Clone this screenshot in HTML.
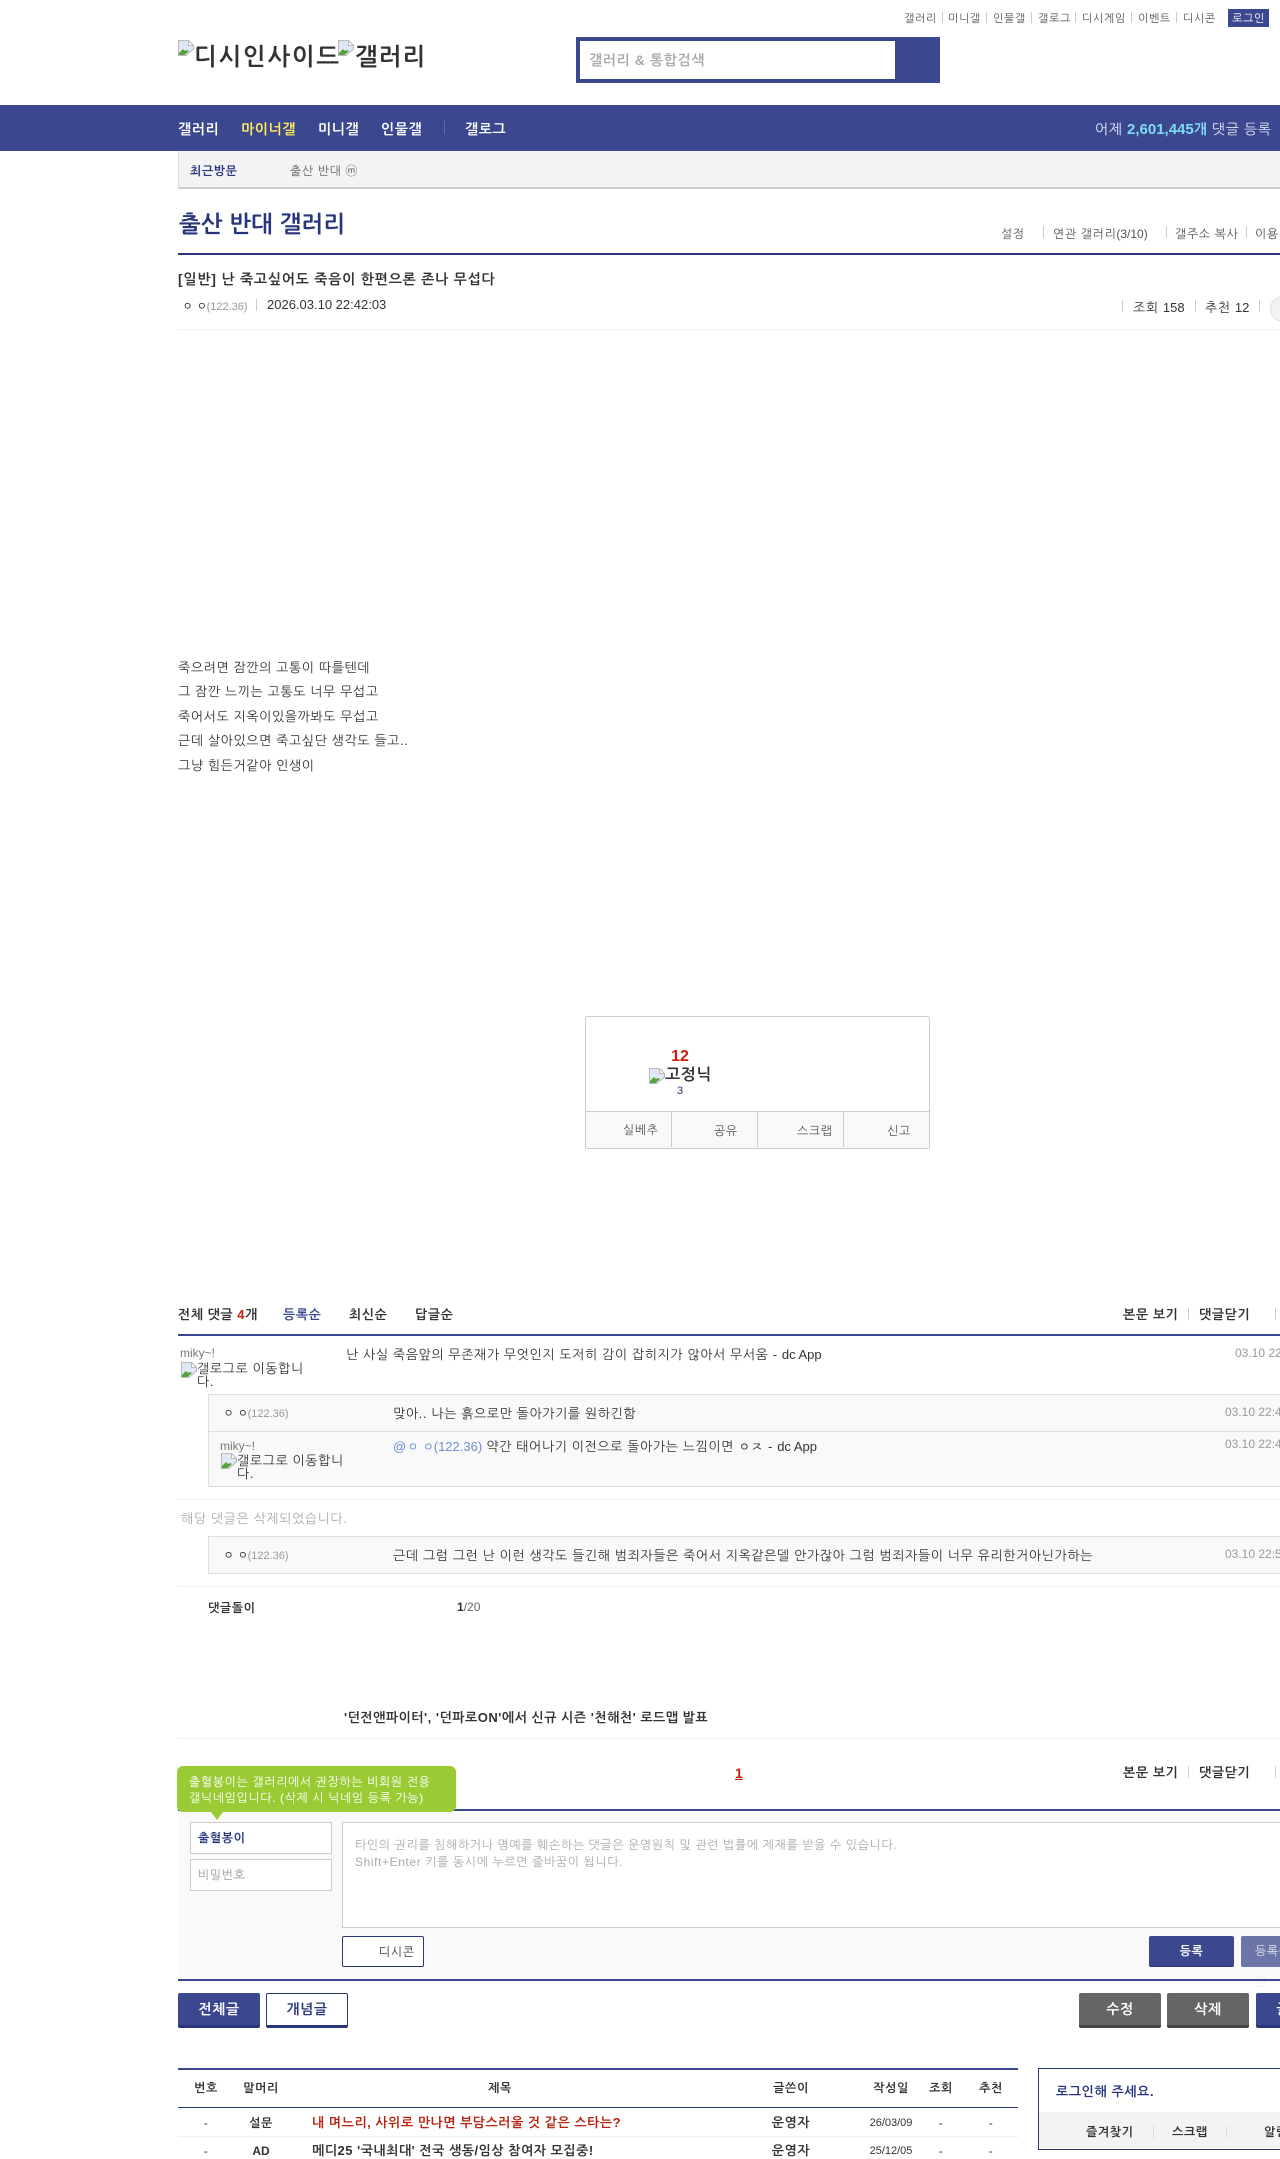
<!DOCTYPE html>
<html lang="ko"><head><meta charset="utf-8"><title>출산 반대 갤러리</title>
<style>
html,body{margin:0;padding:0;background:#fff}
body{position:relative;width:1280px;height:2156px;overflow:hidden;font-family:"Liberation Sans","NanumGothic",sans-serif;font-size:12px;color:#333;letter-spacing:.05em}
.t{position:absolute;white-space:nowrap;line-height:16px;margin-top:1px}
.l{letter-spacing:0}
.p{letter-spacing:0;font-size:11px;color:#999;margin-left:-4px}
.b{font-weight:bold}
.r{position:absolute}
.c{transform:translateX(-50%)}
.s{position:absolute;width:1px;background:#ccc}
svg.bi{position:absolute;width:16px;height:16px}
.d{color:#999;letter-spacing:0}
.btn{position:absolute;box-sizing:border-box;text-align:center;font-weight:bold;font-size:14px;border-radius:2px}
</style></head><body>
<span class="t" style="left:904px;top:10px;font-size:11px;color:#555">갤러리</span><i class="s" style="left:942px;top:12px;height:11px"></i>
<span class="t" style="left:948px;top:10px;font-size:11px;color:#555">미니갤</span><i class="s" style="left:986px;top:12px;height:11px"></i>
<span class="t" style="left:993px;top:10px;font-size:11px;color:#555">인물갤</span><i class="s" style="left:1031px;top:12px;height:11px"></i>
<span class="t" style="left:1038px;top:10px;font-size:11px;color:#555">갤로그</span><i class="s" style="left:1075px;top:12px;height:11px"></i>
<span class="t" style="left:1082px;top:10px;font-size:11px;color:#555">디시게임</span><i class="s" style="left:1131px;top:12px;height:11px"></i>
<span class="t" style="left:1138px;top:10px;font-size:11px;color:#555">이벤트</span><i class="s" style="left:1176px;top:12px;height:11px"></i>
<span class="t" style="left:1183px;top:10px;font-size:11px;color:#555">디시콘</span>
<div class="r" style="left:1228px;top:9px;width:41px;height:18px;background:#3b4890;color:#fff;font-size:11px;line-height:20px;text-align:center">로그인</div>

<svg class="bi" style="left:178px;top:40px" viewBox="0 0 16 16"><path d="M.5.5H10.5L15.5 5.500V9L8 15.500H.5Z" fill="#dfe8f7" stroke="#b9b9b9"/><path d="M10.500.5V5.500H15.500Z" fill="#fff" stroke="#b9b9b9"/><path d="M1 13L5 9L7 11L9 10L11 11L6.500 15H1Z" fill="#5aa13c"/></svg>
<span class="t b" style="left:194px;top:43px;font-size:24px;line-height:28px;color:#333;letter-spacing:.08em">디시인사이드</span>
<svg class="bi" style="left:338px;top:40px" viewBox="0 0 16 16"><path d="M.5.5H10.5L15.5 5.500V9L8 15.500H.5Z" fill="#dfe8f7" stroke="#b9b9b9"/><path d="M10.500.5V5.500H15.500Z" fill="#fff" stroke="#b9b9b9"/><path d="M1 13L5 9L7 11L9 10L11 11L6.500 15H1Z" fill="#5aa13c"/></svg>
<span class="t b" style="left:355px;top:43px;font-size:24px;line-height:28px;color:#333;letter-spacing:.05em">갤러리</span>

<div class="r" style="left:576px;top:37px;width:364px;height:46px;background:#3b4890"></div>
<div class="r" style="left:580px;top:41px;width:315px;height:38px;background:#fff"></div>
<span class="t b" style="left:589px;top:51px;font-size:14px;color:#aaa">갤러리 &amp; 통합검색</span>

<div class="r" style="left:0;top:105px;width:1280px;height:46px;background:#3b4890"></div>
<span class="t b" style="left:178px;top:120px;font-size:14px;color:#fff">갤러리</span>
<span class="t b" style="left:241px;top:120px;font-size:14px;color:#ffe95c">마이너갤</span>
<span class="t b" style="left:318px;top:120px;font-size:14px;color:#fff">미니갤</span>
<span class="t b" style="left:381px;top:120px;font-size:14px;color:#fff">인물갤</span>
<i class="s" style="left:444px;top:121px;height:13px;background:#5f6aa8"></i>
<span class="t b" style="left:465px;top:120px;font-size:14px;color:#fff">갤로그</span>
<span class="t" style="left:1095px;top:120px;font-size:14px;color:#e4e6f2">어제 <b class="l" style="color:#7fdcf5;font-size:15px">2,601,445</b><b style="color:#7fdcf5">개</b> 댓글 등록</span>

<div class="r" style="left:178px;top:151px;width:1102px;height:36px;background:#f3f3f3;border-left:1px solid #ddd;border-bottom:2px solid #ccc"></div>
<span class="t b" style="left:190px;top:162px;font-size:12px;color:#29367c">최근방문</span>
<span class="t" style="left:290px;top:162px;font-size:12px;color:#666">출산 반대 ⓜ</span>

<span class="t b" style="left:179px;top:208px;font-size:23px;line-height:30px;color:#29367c;letter-spacing:.01em">출산 반대 갤러리</span>
<span class="t" style="left:1001px;top:225px;color:#555">설정</span><i class="s" style="left:1043px;top:226px;height:12px"></i>
<span class="t" style="left:1053px;top:225px;color:#555">연관 갤러리<span class="l">(3/10)</span></span><i class="s" style="left:1166px;top:226px;height:12px"></i>
<span class="t" style="left:1175px;top:225px;color:#555">갤주소 복사</span><i class="s" style="left:1246px;top:226px;height:12px"></i>
<span class="t" style="left:1255px;top:225px;color:#555">이용 안내</span>
<div class="r" style="left:178px;top:253px;width:1102px;height:2px;background:#29367c"></div>

<span class="t b" style="left:178px;top:270px;font-size:14px;color:#333;letter-spacing:.055em">[일반] 난 죽고싶어도 죽음이 한편으론 존나 무섭다</span>
<span class="t" style="left:182px;top:297px;font-size:12px;color:#333;letter-spacing:.25em">ㅇㅇ<span class="p">(122.36)</span></span>
<i class="s" style="left:256px;top:299px;height:12px"></i>
<span class="t l" style="left:267px;top:296px;font-size:13px;color:#333">2026.03.10 22:42:03</span>
<i class="s" style="left:1122px;top:300px;height:12px"></i>
<span class="t" style="left:1133px;top:299px;font-size:13px;color:#333">조회 <span class="l">158</span></span>
<i class="s" style="left:1195px;top:300px;height:12px"></i>
<span class="t" style="left:1205px;top:299px;font-size:13px;color:#333">추천 <span class="l">12</span></span>
<i class="s" style="left:1259px;top:300px;height:12px"></i>
<div class="r" style="left:1270px;top:296px;width:24px;height:24px;border-radius:50%;background:#f3f3f3;border:1px solid #ddd"></div>
<div class="r" style="left:178px;top:329px;width:1102px;height:1px;background:#eee"></div>

<span class="t" style="left:178px;top:659px;font-size:13px">죽으려면 잠깐의 고통이 따를텐데</span>
<span class="t" style="left:178px;top:683px;font-size:13px">그 잠깐 느끼는 고통도 너무 무섭고</span>
<span class="t" style="left:178px;top:708px;font-size:13px">죽어서도 지옥이있을까봐도 무섭고</span>
<span class="t" style="left:178px;top:732px;font-size:13px">근데 살아있으면 죽고싶단 생각도 들고..</span>
<span class="t" style="left:178px;top:757px;font-size:13px">그냥 힘든거같아 인생이</span>

<div class="r" style="left:585px;top:1016px;width:343px;height:131px;border:1px solid #ccc;border-radius:2px"></div>
<div class="r" style="left:586px;top:1111px;width:343px;height:36px;background:#f9f9f9;border-top:1px solid #ccc"></div>
<i class="s" style="left:671px;top:1112px;height:35px"></i><i class="s" style="left:757px;top:1112px;height:35px"></i><i class="s" style="left:843px;top:1112px;height:35px"></i>
<span class="t b c l" style="left:680px;top:1048px;font-size:16px;color:#c81e0a">12</span>
<svg class="bi" style="left:649px;top:1068px" viewBox="0 0 16 16"><path d="M.5.5H10.5L15.5 5.500V9L8 15.500H.5Z" fill="#dfe8f7" stroke="#b9b9b9"/><path d="M10.500.5V5.500H15.500Z" fill="#fff" stroke="#b9b9b9"/><path d="M1 13L5 9L7 11L9 10L11 11L6.500 15H1Z" fill="#5aa13c"/></svg>
<span class="t" style="left:665px;top:1066px;font-size:16px;line-height:18px;font-weight:bold;color:#333">고정닉</span>
<span class="t c l" style="left:680px;top:1082px;font-size:11px;color:#29367c">3</span>
<span class="t" style="left:623px;top:1121px;color:#555">실베추</span>
<span class="t" style="left:714px;top:1122px;color:#555">공유</span>
<span class="t" style="left:797px;top:1122px;color:#555">스크랩</span>
<span class="t" style="left:887px;top:1122px;color:#555">신고</span>

<span class="t b" style="left:178px;top:1306px;font-size:13px;color:#333;letter-spacing:.04em">전체 댓글 <span style="color:#c81e0a">4</span>개</span>
<span class="t b" style="left:283px;top:1306px;font-size:13px;color:#3b4890">등록순</span>
<span class="t b" style="left:349px;top:1306px;font-size:13px;color:#333">최신순</span>
<span class="t b" style="left:415px;top:1306px;font-size:13px;color:#333">답글순</span>
<span class="t b" style="left:1123px;top:1306px;font-size:13px;color:#333">본문 보기</span><i class="s" style="left:1188px;top:1308px;height:12px"></i>
<span class="t b" style="left:1199px;top:1306px;font-size:13px;color:#333">댓글닫기</span><i class="s" style="left:1275px;top:1308px;height:12px"></i>
<div class="r" style="left:178px;top:1334px;width:1102px;height:2px;background:#3b4890"></div>

<span class="t l" style="left:180px;top:1344px;color:#777">miky~!</span>
<svg class="bi" style="left:181px;top:1362px" viewBox="0 0 16 16"><path d="M.5.5H10.5L15.5 5.500V9L8 15.500H.5Z" fill="#dfe8f7" stroke="#b9b9b9"/><path d="M10.500.5V5.500H15.500Z" fill="#fff" stroke="#b9b9b9"/><path d="M1 13L5 9L7 11L9 10L11 11L6.500 15H1Z" fill="#5aa13c"/></svg>
<span class="t" style="left:197px;top:1360px;font-size:13px;color:#333">갤로그로 이동합니</span>
<span class="t" style="left:197px;top:1373px;font-size:13px;color:#333">다.</span>
<span class="t" style="left:346px;top:1346px;font-size:13px;color:#333">난 사실 죽음앞의 무존재가 무엇인지 도저히 감이 잡히지가 않아서 무서움 - <span class="l">dc App</span></span>
<span class="t d" style="left:1235px;top:1344px">03.10 22:41:20</span>

<div class="r" style="left:208px;top:1394px;width:1072px;height:91px;background:#f9f9f9;border:1px solid #ddd;border-right:0"></div>
<div class="r" style="left:209px;top:1431px;width:1071px;height:1px;background:#ddd"></div>
<span class="t" style="left:223px;top:1404px;color:#333;letter-spacing:.25em">ㅇㅇ<span class="p">(122.36)</span></span>
<span class="t" style="left:393px;top:1405px;font-size:13px;color:#333">맞아.. 나는 흙으로만 돌아가기를 원하긴함</span>
<span class="t d" style="left:1225px;top:1403px">03.10 22:43:11</span>
<span class="t l" style="left:220px;top:1437px;color:#777">miky~!</span>
<svg class="bi" style="left:221px;top:1453px" viewBox="0 0 16 16"><path d="M.5.5H10.5L15.5 5.500V9L8 15.500H.5Z" fill="#dfe8f7" stroke="#b9b9b9"/><path d="M10.500.5V5.500H15.500Z" fill="#fff" stroke="#b9b9b9"/><path d="M1 13L5 9L7 11L9 10L11 11L6.500 15H1Z" fill="#5aa13c"/></svg>
<span class="t" style="left:237px;top:1452px;font-size:13px;color:#333">갤로그로 이동합니</span>
<span class="t" style="left:237px;top:1465px;font-size:13px;color:#333">다.</span>
<span class="t" style="left:393px;top:1438px;font-size:13px;color:#333"><span style="color:#6d8fd0">@<span style="letter-spacing:.25em">ㅇㅇ</span><span class="l" style="margin-left:-4px">(122.36)</span></span> 약간 태어나기 이전으로 돌아가는 느낌이면 ㅇㅈ - <span class="l">dc App</span></span>
<span class="t d" style="left:1225px;top:1435px">03.10 22:45:02</span>
<div class="r" style="left:178px;top:1499px;width:1102px;height:1px;background:#eee"></div>

<span class="t" style="left:181px;top:1510px;font-size:13px;color:#aaa">해당 댓글은 삭제되었습니다.</span>
<div class="r" style="left:208px;top:1536px;width:1072px;height:36px;background:#f9f9f9;border:1px solid #ddd;border-right:0"></div>
<span class="t" style="left:223px;top:1546px;color:#333;letter-spacing:.25em">ㅇㅇ<span class="p">(122.36)</span></span>
<span class="t" style="left:393px;top:1547px;font-size:13px;color:#333">근데 그럼 그런 난 이런 생각도 들긴해 범죄자들은 죽어서 지옥같은델 안가잖아 그럼 범죄자들이 너무 유리한거아닌가하는</span>
<span class="t d" style="left:1225px;top:1545px">03.10 22:51:40</span>
<div class="r" style="left:178px;top:1586px;width:1102px;height:1px;background:#eee"></div>

<span class="t b" style="left:208px;top:1599px;color:#333">댓글돌이</span>
<span class="t l" style="left:457px;top:1598px;color:#666"><b style="color:#333">1</b>/20</span>
<span class="t b" style="left:344px;top:1709px;font-size:13px;color:#333;letter-spacing:.04em">'던전앤파이터', '던파로ON'에서 신규 시즌 '천해천' 로드맵 발표</span>
<div class="r" style="left:178px;top:1738px;width:1102px;height:1px;background:#eee"></div>

<span class="t b l" style="left:735px;top:1764px;font-size:14px;color:#c81e0a;text-decoration:underline">1</span>
<span class="t b" style="left:1123px;top:1764px;font-size:13px;color:#333">본문 보기</span><i class="s" style="left:1188px;top:1766px;height:12px"></i>
<span class="t b" style="left:1199px;top:1764px;font-size:13px;color:#333">댓글닫기</span><i class="s" style="left:1275px;top:1766px;height:12px"></i>

<div class="r" style="left:178px;top:1811px;width:1102px;height:168px;background:#f9f9f9"></div>
<div class="r" style="left:178px;top:1809px;width:1102px;height:2px;background:#3b4890"></div>
<div class="r" style="left:177px;top:1766px;width:279px;height:46px;background:#9acb34;border-radius:6px"></div>
<div class="r" style="left:211px;top:1812px;width:0;height:0;border-left:6px solid transparent;border-right:6px solid transparent;border-top:8px solid #9acb34"></div>
<span class="t" style="left:189px;top:1773px;color:#fff">출혈봉이는 갤러리에서 권장하는 비회원 전용</span>
<span class="t" style="left:189px;top:1789px;color:#fff">갤닉네임입니다. (삭제 시 닉네임 등록 가능)</span>

<div class="r" style="left:190px;top:1822px;width:140px;height:30px;background:#fff;border:1px solid #ccc"></div>
<span class="t" style="left:198px;top:1829px;color:#29367c;font-weight:bold">출혈봉이</span>
<div class="r" style="left:190px;top:1859px;width:140px;height:30px;background:#fff;border:1px solid #ccc"></div>
<span class="t" style="left:198px;top:1866px;color:#999">비밀번호</span>
<div class="r" style="left:342px;top:1822px;width:938px;height:104px;background:#fff;border:1px solid #ccc;border-right:0"></div>
<span class="t" style="left:355px;top:1836px;color:#aaa">타인의 권리를 침해하거나 명예를 훼손하는 댓글은 운영원칙 및 관련 법률에 제재를 받을 수 있습니다.</span>
<span class="t" style="left:355px;top:1853px;color:#aaa">Shift+Enter 키를 동시에 누르면 줄바꿈이 됩니다.</span>
<div class="btn" style="left:342px;top:1936px;width:82px;height:31px;background:#fff;border:1px solid #29367c;font-size:12px;font-weight:normal;color:#333;line-height:30px;padding-left:36px;text-align:left">디시콘</div>
<div class="btn" style="left:1149px;top:1936px;width:85px;height:31px;background:#3b4890;color:#fff;font-size:12px;line-height:31px;border-bottom:1px solid #29367c">등록</div>
<div class="btn" style="left:1241px;top:1936px;width:60px;height:31px;background:#6b75a8;color:#e8e8f2;font-size:12px;line-height:31px;text-align:left;padding-left:14px;font-weight:normal">등록+추천</div>
<div class="r" style="left:178px;top:1979px;width:1102px;height:2px;background:#3b4890"></div>

<div class="btn" style="left:178px;top:1993px;width:82px;height:35px;background:#3b4890;border-bottom:3px solid #29367c;color:#fff;line-height:32px">전체글</div>
<div class="btn" style="left:266px;top:1993px;width:82px;height:35px;background:#fff;border:1px solid #29367c;border-bottom:3px solid #29367c;color:#29367c;line-height:30px">개념글</div>
<div class="btn" style="left:1079px;top:1993px;width:82px;height:35px;background:#666;border-bottom:3px solid #444;color:#fff;line-height:32px">수정</div>
<div class="btn" style="left:1167px;top:1993px;width:82px;height:35px;background:#666;border-bottom:3px solid #444;color:#fff;line-height:32px">삭제</div>
<div class="btn" style="left:1256px;top:1993px;width:82px;height:35px;background:#3b4890;border-bottom:3px solid #29367c;color:#fff;line-height:32px">글쓰기</div>

<div class="r" style="left:178px;top:2068px;width:840px;height:2px;background:#3b4890"></div>
<span class="t b c" style="left:206px;top:2079px;color:#333">번호</span>
<span class="t b c" style="left:261px;top:2079px;color:#333">말머리</span>
<span class="t b c" style="left:500px;top:2079px;color:#333">제목</span>
<span class="t b c" style="left:791px;top:2079px;color:#333">글쓴이</span>
<span class="t b c" style="left:891px;top:2079px;color:#333">작성일</span>
<span class="t b c" style="left:941px;top:2079px;color:#333">조회</span>
<span class="t b c" style="left:991px;top:2079px;color:#333">추천</span>
<div class="r" style="left:178px;top:2107px;width:840px;height:1px;background:#29367c"></div>

<span class="t c" style="left:206px;top:2114px;color:#333">-</span>
<span class="t b c" style="left:261px;top:2114px;color:#333">설문</span>
<span class="t b" style="left:312px;top:2114px;font-size:13px;color:#b8210e;letter-spacing:.04em">내 며느리, 사위로 만나면 부담스러울 것 같은 스타는?</span>
<span class="t b c" style="left:791px;top:2114px;font-size:13px;color:#333">운영자</span>
<span class="t c l" style="left:891px;top:2114px;font-size:11px;color:#333">26/03/09</span>
<span class="t c" style="left:941px;top:2114px;color:#333">-</span>
<span class="t c" style="left:991px;top:2114px;color:#333">-</span>
<div class="r" style="left:178px;top:2136px;width:840px;height:1px;background:#eee"></div>
<span class="t c" style="left:206px;top:2142px;color:#333">-</span>
<span class="t b c l" style="left:261px;top:2142px;color:#333">AD</span>
<span class="t b" style="left:312px;top:2142px;font-size:13px;color:#333;letter-spacing:.04em">메디25 '국내최대' 전국 생동/임상 참여자 모집중!</span>
<span class="t b c" style="left:791px;top:2142px;font-size:13px;color:#333">운영자</span>
<span class="t c l" style="left:891px;top:2142px;font-size:11px;color:#333">25/12/05</span>
<span class="t c" style="left:941px;top:2142px;color:#333">-</span>
<span class="t c" style="left:991px;top:2142px;color:#333">-</span>

<div class="r" style="left:1038px;top:2068px;width:300px;height:80px;border:1px solid #29367c"></div>
<span class="t b" style="left:1056px;top:2083px;font-size:13px;color:#29367c">로그인해 주세요.</span>
<div class="r" style="left:1039px;top:2112px;width:241px;height:36px;background:#f3f3f3"></div>
<span class="t b" style="left:1086px;top:2123px;color:#333">즐겨찾기</span><i class="s" style="left:1153px;top:2126px;height:12px;background:#ddd"></i>
<span class="t b" style="left:1172px;top:2123px;color:#333">스크랩</span><i class="s" style="left:1226px;top:2126px;height:12px;background:#ddd"></i>
<span class="t b" style="left:1264px;top:2123px;color:#333">알림</span>
</body></html>
